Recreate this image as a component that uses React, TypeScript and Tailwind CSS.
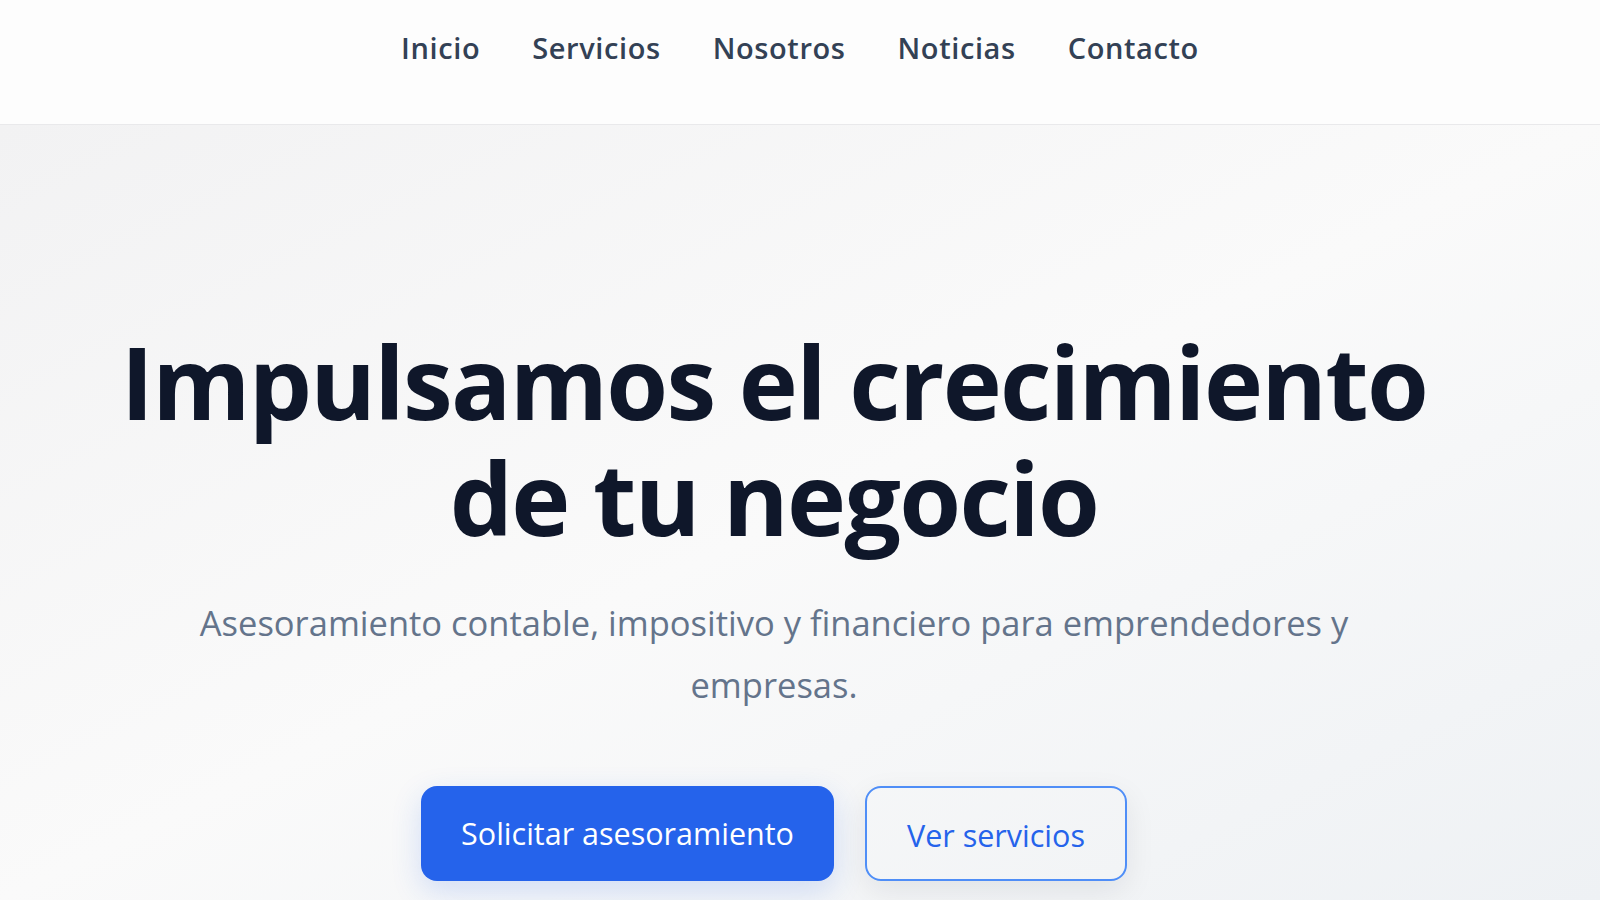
import React from 'react'

const links = [
    { name: "Inicio", url: "#inicio" },
    { name: "Servicios", url: "#servicios" },
    { name: "Nosotros", url: "#nosotros" },
    { name: "Noticias", url: "#noticias" },
    { name: "Contacto", url: "#contacto" }
]

const App: React.FC = () => {
    return (
        <div className="min-h-screen font-['Open_Sans',sans-serif] bg-[#f4f4f5]">
            <header className="h-[125px] bg-[#fdfdfd] border-b border-[#e9e9eb] flex items-start justify-center pt-[26px]">
                <nav>
                    <ul className="flex items-center gap-[52px]">
                        {links.map((link, i) => (
                            <li key={i}>
                                <a href={link.url} className="text-[29px] leading-[44px] tracking-[0.6px] text-[#334155] font-semibold">{link.name}</a>
                            </li>
                        ))}
                    </ul>
                </nav>
            </header>

            <section className="h-[775px] bg-gradient-to-br from-[#f2f2f3] via-[#fafafa] to-[#eef1f4] flex flex-col items-center pt-[198px] pr-[52px] text-center">
                <h1 className="text-[100px] leading-[116px] font-bold text-[#0f172a] tracking-[-1.7px]">
                    Impulsamos el crecimiento
                    <br />
                    de tu negocio
                </h1>
                <p className="mt-[37px] w-[1180px] text-[34.5px] leading-[62px] text-[#64748b]">
                    Asesoramiento contable, impositivo y financiero para emprendedores y empresas.
                </p>
                <div className="mt-[70px] flex gap-[31px]">
                    <button className="h-[95px] px-[40px] rounded-[16px] bg-[#2563eb] text-white text-[30.5px] shadow-[0_10px_30px_rgba(37,99,235,0.18)]">
                        Solicitar asesoramiento
                    </button>
                    <button className="h-[95px] px-[40px] rounded-[16px] border-2 border-[#4f8ef7] text-[#2563eb] text-[30.5px] shadow-[0_10px_30px_rgba(15,23,42,0.08)]">
                        <span className="relative top-[2px]">Ver servicios</span>
                    </button>
                </div>
            </section>
        </div>
    )
}

export default App
